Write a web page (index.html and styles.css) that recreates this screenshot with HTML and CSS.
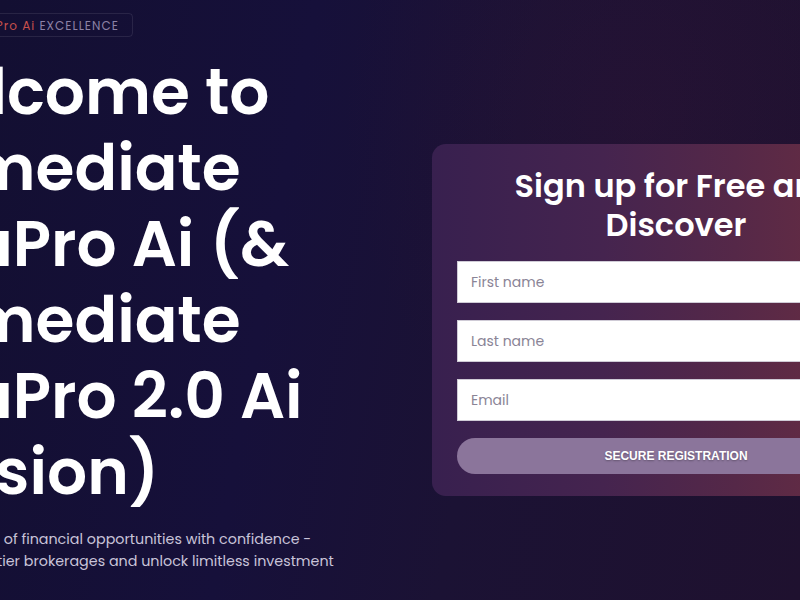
FILE: index.html
```html
<!DOCTYPE html>
<html lang="en">
<head>
<meta charset="utf-8">
<title>Immediate NeuPro Ai</title>
<link rel="stylesheet" href="styles.css">
</head>
<body>
<div class="page">
  <section class="hero">
    <div class="badge"><span class="badge-brand">Immediate NeuPro Ai</span> EXCELLENCE</div>
    <h1 class="title">
      <span class="line">Welcome to</span>
      <span class="line">Immediate</span>
      <span class="line">NeuPro Ai (&amp;</span>
      <span class="line">Immediate</span>
      <span class="line">NeuPro 2.0 Ai</span>
      <span class="line">Version)</span>
    </h1>
    <p class="lead">
      <span class="lead-line p1">Explore the world of financial opportunities with confidence -</span>
      <span class="lead-line p2">connect with top-tier brokerages and unlock limitless investment</span>
    </p>
  </section>
  <aside class="card">
    <h2 class="card-title">Sign up for Free and Discover</h2>
    <form class="form">
      <input class="field" type="text" placeholder="First name">
      <input class="field" type="text" placeholder="Last name">
      <input class="field" type="email" placeholder="Email">
      <button class="submit" type="button">SECURE REGISTRATION</button>
    </form>
  </aside>
</div>
</body>
</html>
```

FILE: styles.css
```css
* { box-sizing: border-box; }

html, body {
  margin: 0;
  padding: 0;
}

body {
  width: 800px;
  height: 600px;
  overflow: hidden;
  font-family: "Poppins", "Inter", "Noto Sans", sans-serif;
  color: #fff;
  background:
    radial-gradient(ellipse 420px 500px at 640px 120px, rgba(55, 20, 55, 0.3), transparent 70%),
    linear-gradient(100deg, #130f32 0%, #16103a 35%, #1b1234 60%, #1f112f 100%);
}

.page {
  display: flex;
  align-items: flex-start;
  width: 920px;
}

.hero {
  width: 432px;
  flex: none;
  padding-top: 12px;
}

.badge {
  display: inline-block;
  margin-left: -123px;
  height: 24px;
  line-height: 23px;
  padding: 0 13px 0 12px;
  border: 1px solid rgba(255, 255, 255, 0.09);
  border-radius: 4px;
  font-size: 12px;
  letter-spacing: 1px;
  color: #8c82a6;
  white-space: nowrap;
}

.badge-brand {
  color: #c8504c;
}

.title {
  margin: 17px 0 0 -114px;
  font-size: 63px;
  line-height: 76px;
  font-weight: 600;
  white-space: nowrap;
}

.line {
  display: block;
}

.lead {
  margin: 18px 0 0 0;
  font-size: 14.3px;
  line-height: 22px;
  color: #c9c4d9;
  white-space: nowrap;
}

.lead-line {
  display: block;
}

.p1 { margin-left: -121px; }
.p2 { margin-left: -131px; }

.card {
  flex: none;
  width: 488px;
  margin-top: 144px;
  padding: 22px 25px 22px;
  border-radius: 14px;
  background: linear-gradient(90deg, #38204f 0%, #45244f 35%, #552848 62%, #612b44 78%, #6a2c42 100%);
}

.card-title {
  margin: 0 0 17px 0;
  text-align: center;
  font-size: 32px;
  line-height: 39px;
  font-weight: 600;
  color: #fff;
}

.form {
  display: flex;
  flex-direction: column;
  gap: 17px;
}

.field {
  display: block;
  width: 100%;
  height: 42px;
  margin: 0;
  padding: 0 13px;
  border: 1px solid #cfcbd6;
  border-radius: 0;
  background: #fff;
  font-family: "Poppins", "Inter", "Noto Sans", sans-serif;
  font-size: 14px;
  color: #333;
}

.field::placeholder {
  color: #8a8496;
}

.submit {
  display: block;
  width: 100%;
  height: 36px;
  border: 0;
  border-radius: 18px;
  background: #8b759b;
  color: #fff;
  font-family: "Liberation Sans", Arial, sans-serif;
  font-size: 12px;
  font-weight: 700;
  text-shadow: 0 1px 2px rgba(0, 0, 0, 0.3);
  cursor: pointer;
}
```
